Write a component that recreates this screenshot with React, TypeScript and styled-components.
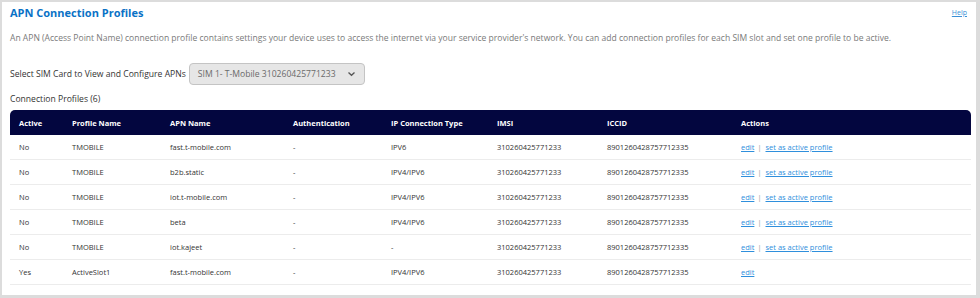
import * as React from 'react'
import styled, { createGlobalStyle } from 'styled-components'

const GlobalStyle = createGlobalStyle`
  html, body {
    margin: 0;
    padding: 0;
    background: #dcdcdc;
  }
  body {
    font-family: "Open Sans", "Liberation Sans", sans-serif;
  }
`

const Frame = styled.div`
  width: 980px;
  height: 298px;
  box-sizing: border-box;
  padding: 2px 4px 3px 2px;
  background: #dcdcdc;
`

const Panel = styled.div`
  height: 100%;
  box-sizing: border-box;
  background: #fff;
  padding: 0 5px 0 8px;
`

const TitleRow = styled.div`
  display: flex;
  justify-content: space-between;
  align-items: center;
  height: 20px;
`

const Title = styled.h1`
  margin: 0;
  font-size: 11px;
  font-weight: 700;
  color: #0a72c6;
`

const HelpLink = styled.a`
  font-size: 7px;
  color: #3a8fd6;
  text-decoration: underline;
  margin-right: 4px;
`

const Description = styled.p`
  margin: 10px 0 0;
  font-size: 8.55px;
  color: #7a7a7a;
`

const SelectRow = styled.div`
  display: flex;
  align-items: center;
  gap: 3px;
  margin-top: 19px;
  font-size: 8.6px;
  color: #333;
`

const SelectBox = styled.div`
  display: flex;
  align-items: center;
  justify-content: space-between;
  box-sizing: border-box;
  width: 176px;
  height: 22px;
  padding: 0 8px 0 8px;
  background: #e6e6e6;
  border: 1px solid #c4c4c4;
  border-radius: 4px;
  color: #6a6a6a;
`

const SectionLabel = styled.div`
  margin-top: 8px;
  font-size: 8.6px;
  color: #333;
`

const Table = styled.table`
  width: 961px;
  table-layout: fixed;
  margin-top: 5px;
  border-collapse: separate;
  border-spacing: 0;
  font-size: 7.5px;
  color: #333;
`

const HeadCell = styled.th<{ $w?: number; $first?: boolean; $last?: boolean }>`
  width: ${p => (p.$w ? `${p.$w}px` : 'auto')};
  height: 25px;
  padding: 0 0 0 9px;
  text-align: left;
  background: #03063f;
  color: #fff;
  font-weight: 700;
  border-top-left-radius: ${p => (p.$first ? '5px' : '0')};
  border-top-right-radius: ${p => (p.$last ? '5px' : '0')};
`

const Cell = styled.td`
  height: 24px;
  padding: 0 0 0 9px;
  white-space: nowrap;
  border-bottom: 1px solid #ececec;
`

const ActionLink = styled.a`
  color: #2f8fdc;
  text-decoration: underline;
`

const Divider = styled.span`
  color: #999;
  margin: 0 4px 0 3px;
`

const Chevron = () => (
  <svg width="9" height="6" viewBox="0 0 9 6">
    <path d="M1.5 1.5 L4.5 4.3 L7.5 1.5" fill="none" stroke="#555" strokeWidth="1.3" />
  </svg>
)

// content widths; each cell adds 9px left padding
const columns: [string, number?][] = [
  ['Active', 44],
  ['Profile Name', 89],
  ['APN Name', 114],
  ['Authentication', 89],
  ['IP Connection Type', 97],
  ['IMSI', 101],
  ['ICCID', 125],
  ['Actions'],
]

const rows = [
  ['No', 'TMOBILE', 'fast.t-mobile.com', '-', 'IPV6'],
  ['No', 'TMOBILE', 'b2b.static', '-', 'IPV4/IPV6'],
  ['No', 'TMOBILE', 'iot.t-mobile.com', '-', 'IPV4/IPV6'],
  ['No', 'TMOBILE', 'beta', '-', 'IPV4/IPV6'],
  ['No', 'TMOBILE', 'iot.kajeet', '-', '-'],
  ['Yes', 'ActiveSlot1', 'fast.t-mobile.com', '-', 'IPV4/IPV6'],
]

const App = () => {
  return (
    <Frame>
      <GlobalStyle />
      <Panel>
        <TitleRow>
          <Title>APN Connection Profiles</Title>
          <HelpLink href="#">Help</HelpLink>
        </TitleRow>
        <Description>
          An APN (Access Point Name) connection profile contains settings your device uses to access the internet via your service provider's network. You can add connection profiles for each SIM slot and set one profile to be active.
        </Description>
        <SelectRow>
          <span>Select SIM Card to View and Configure APNs</span>
          <SelectBox>
            <span>SIM 1- T-Mobile 310260425771233</span>
            <Chevron />
          </SelectBox>
        </SelectRow>
        <SectionLabel>Connection Profiles (6)</SectionLabel>
        <Table>
          <thead>
            <tr>
              {columns.map(([name, w], i) => (
                <HeadCell key={name} $w={w} $first={i === 0} $last={i === columns.length - 1}>
                  {name}
                </HeadCell>
              ))}
            </tr>
          </thead>
          <tbody>
            {rows.map((r, i) => (
              <tr key={i}>
                {r.map((c, j) => (
                  <Cell key={j}>{c}</Cell>
                ))}
                <Cell>310260425771233</Cell>
                <Cell>8901260428757712335</Cell>
                <Cell>
                  <ActionLink href="#">edit</ActionLink>
                  {r[0] === 'No' && (
                    <>
                      <Divider>|</Divider>
                      <ActionLink href="#">set as active profile</ActionLink>
                    </>
                  )}
                </Cell>
              </tr>
            ))}
          </tbody>
        </Table>
      </Panel>
    </Frame>
  )
}

export default App
